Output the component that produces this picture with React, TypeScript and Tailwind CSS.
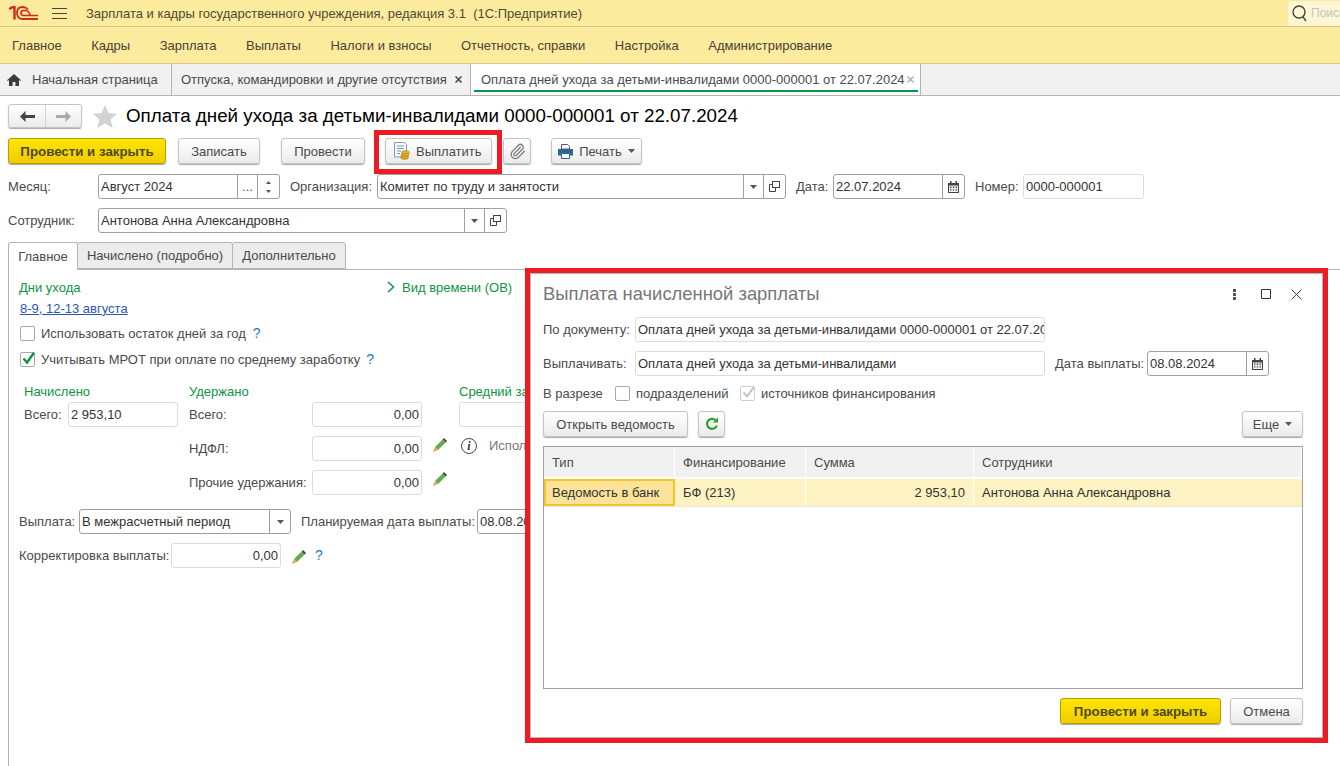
import React from "react";
import { Paperclip } from "lucide-react";

function Btn({ className = "", yellow = false, children }: { className?: string; yellow?: boolean; children: React.ReactNode }) {
  return (
    <div
      className={
        "flex h-[26px] shrink-0 items-center justify-center rounded-[3px] border shadow-[0_1px_1px_#a8a8a8] " +
        (yellow
          ? "border-[#b59f00] bg-linear-to-b from-[#ffe600] to-[#f0cc00] text-[13.3px] font-bold text-[#4d4a20] "
          : "border-[#c4c4c4] bg-linear-to-b from-white to-[#ebebeb] text-[#4a4a4a] ") +
        className
      }
    >
      {children}
    </div>
  );
}

function Field({ className = "", light = false, right = false, children, addons }: { className?: string; light?: boolean; right?: boolean; children?: React.ReactNode; addons?: React.ReactNode }) {
  return (
    <div className={"flex h-[25px] shrink-0 items-stretch overflow-hidden rounded-[3px] border bg-white text-[#333] " + (light ? "border-[#dcdcdc] " : "border-[#a0a0a0] ") + className}>
      <div className={"flex min-w-0 flex-1 items-center overflow-hidden whitespace-nowrap px-[2px] " + (right ? "justify-end" : "")}>{children}</div>
      {addons}
    </div>
  );
}

function Addon({ className = "", children }: { className?: string; children?: React.ReactNode }) {
  return <div className={"flex shrink-0 items-center justify-center border-l border-[#a0a0a0] " + className}>{children}</div>;
}

const Caret = ({ c = "#555" }: { c?: string }) => (
  <svg width="7" height="4" viewBox="0 0 7 4"><path d="M0 0h7L3.5 4z" fill={c} /></svg>
);

const OpenIcon = () => (
  <svg width="11" height="11" viewBox="0 0 11 11" fill="none" stroke="#444" strokeWidth="1">
    <rect x="3.5" y="0.5" width="7" height="6" />
    <path d="M3.5 3.5H.5v7h6V6.5" />
  </svg>
);

const Calendar = () => (
  <svg width="11" height="12" viewBox="0 0 11 12">
    <path d="M0 2h11v10H0z" fill="#444" />
    <path d="M2 0h1.5v3H2zM7.5 0H9v3H7.5z" fill="#444" />
    <path d="M1 4.5h9V11H1z" fill="#f2f2f2" />
    <path d="M2 5.5h1.4v1.4H2zM4.8 5.5h1.4v1.4H4.8zM7.6 5.5H9v1.4H7.6zM2 8.2h1.4v1.4H2zM4.8 8.2h1.4v1.4H4.8zM7.6 8.2H9v1.4H7.6z" fill="#444" />
  </svg>
);

const Pencil = () => (
  <svg width="14" height="14" viewBox="0 0 14 14" className="block shrink-0">
    <path d="M9.6 1.4 12.6 4.4 5 12 2 9z" fill="#5fae4d" />
    <path d="M9.6 1.4 11 0l3 3-1.4 1.4z" fill="#3f4a3c" />
    <path d="M2 9l3 3-4.6 1.6z" fill="#e9a23b" />
    <path d="M.9 12.4l.7.7-1.2.5z" fill="#333" />
  </svg>
);

const Help = ({ className = "" }: { className?: string }) => <span className={"text-[14px] text-[#1b7cc4] " + className}>?</span>;

const Box = ({ className = "", children }: { className?: string; children?: React.ReactNode }) => (
  <span className={"relative block h-[15px] w-[15px] shrink-0 rounded-[2px] border border-[#a8a8a8] bg-white " + className}>{children}</span>
);

const Check = ({ c, w = 2.4 }: { c: string; w?: number }) => (
  <svg className="absolute -top-[2px] left-0" width="15" height="15" viewBox="0 0 15 15" fill="none">
    <path d="M2.5 7.5 6 11.5 13 1.8" stroke={c} strokeWidth={w} />
  </svg>
);

const Close = ({ c }: { c: string }) => (
  <svg width="7" height="7" viewBox="0 0 7 7" stroke={c} strokeWidth="1.5"><path d="M.5.5l6 6M6.5.5l-6 6" /></svg>
);

export default function App() {
  return (
    <div className="relative flex h-[766px] w-[1340px] flex-col overflow-hidden bg-white font-['Liberation_Sans',Arial,sans-serif] text-[13px] leading-[15px] text-[#4a4a4a]">
      {/* title bar */}
      <div className="flex h-[27px] shrink-0 items-center border-b border-[#d6c887] bg-[#fbeb9d]">
        <svg className="ml-[9px] shrink-0" width="29" height="14" viewBox="0 0 29 14" fill="none" stroke="#d8261c">
          <path d="M0 3 3.500 1.200h2V13.500" strokeWidth="2.4" />
          <path d="M19 3.500C17.500 1.800 15.500 1 13.500 1 10 1 8 3.500 8 7c0 3.500 2.200 6 5.500 6H29" strokeWidth="1.8" />
          <path d="M29 9.500H14.500a2.500 2.500 0 0 1 0-5h2c2.200 0 3.800 1.600 4.800 5" strokeWidth="1.600" />
        </svg>
        <svg className="ml-[14px] shrink-0" width="15" height="11" viewBox="0 0 15 11" stroke="#444"><path d="M0 .5h15M0 5.500h15M0 10.500h15" /></svg>
        <span className="ml-[19px] text-[#4f4a35]">Зарплата и кадры государственного учреждения, редакция 3.1&nbsp; (1С:Предприятие)</span>
        <div className="ml-auto flex h-[25px] w-[52px] items-center overflow-hidden rounded-l-[3px] bg-[#fdf6d4] pl-[3px]">
          <svg className="shrink-0" width="17" height="18" viewBox="0 0 17 18" fill="none" stroke="#444" strokeWidth="1.4"><circle cx="8" cy="8" r="6" /><path d="m12 13 3 4" /></svg>
          <span className="ml-[3px] text-[12px] text-[#c4c4c4]">Поиск</span>
        </div>
      </div>
      {/* menu */}
      <div className="flex h-[37px] shrink-0 items-center gap-[29.5px] border-b border-[#d6c887] bg-[#fbeb9d] pl-[12px] text-[#4a4038]">
        {["Главное", "Кадры", "Зарплата", "Выплаты", "Налоги и взносы", "Отчетность, справки", "Настройка", "Администрирование"].map((t) => (
          <span key={t}>{t}</span>
        ))}
      </div>
      {/* tabs */}
      <div className="flex h-[32px] shrink-0 items-stretch border-b border-[#b4b4b4] bg-[#f1f1f1]">
        <div className="flex w-[172px] items-center border-r border-[#b4b4b4] pl-[7px]">
          <svg width="14" height="12" viewBox="0 0 14 12"><path d="M7 0 0 6.2l.8.8L2 6v6h3.600V8h2.800v4H12V6l1.200 1 .8-.8z" fill="#3d3d3d" /></svg>
          <span className="ml-[11px]">Начальная страница</span>
        </div>
        <div className="flex w-[299px] items-center border-r border-[#b4b4b4] pl-[9px]">
          <span>Отпуска, командировки и другие отсутствия</span>
          <span className="ml-auto mr-[8px]"><Close c="#444" /></span>
        </div>
        <div className="relative flex w-[450px] items-center border-r border-[#b4b4b4] bg-white pl-[10px]">
          <span>Оплата дней ухода за детьми-инвалидами 0000-000001 от 22.07.2024</span>
          <span className="ml-auto mr-[6px]"><Close c="#b0b0b0" /></span>
          <div className="absolute bottom-[3px] left-[3px] right-[2px] h-[2px] bg-[#0c9447]" />
        </div>
      </div>
      {/* document title */}
      <div className="mt-[8px] flex h-[24px] shrink-0 items-center pl-[8px]">
        <div className="flex h-[24px] w-[74px] items-stretch rounded-[3px] border border-[#c4c4c4] bg-linear-to-b from-white to-[#ebebeb] shadow-[0_1px_1px_#a8a8a8]">
          <div className="flex w-[37px] items-center justify-center border-r border-[#d4d4d4]">
            <svg width="15" height="11" viewBox="0 0 15 11"><path d="M5.500 0 0 5.500 5.500 11V7H15V4H5.500z" fill="#444" /></svg>
          </div>
          <div className="flex flex-1 items-center justify-center">
            <svg width="15" height="11" viewBox="0 0 15 11"><path d="M9.500 0 15 5.500 9.500 11V7H0V4h9.500z" fill="#aaa" /></svg>
          </div>
        </div>
        <svg className="ml-[11px]" width="24" height="23" viewBox="0 0 24 23"><path d="m12 0 3.600 8 8.400.8-6.400 5.600 2 8.600L12 18.400 4.400 23l2-8.600L0 8.800 8.400 8z" fill="#d2d2d2" /></svg>
        <span className="ml-[9px] text-[18.8px] leading-[22px] text-black">Оплата дней ухода за детьми-инвалидами 0000-000001 от 22.07.2024</span>
      </div>
      {/* toolbar */}
      <div className="ml-[8px] mt-[10px] flex h-[26px] shrink-0 items-center">
        <Btn yellow className="w-[158px]">Провести и закрыть</Btn>
        <Btn className="ml-[12px] w-[82px]">Записать</Btn>
        <Btn className="ml-[21px] w-[84px]">Провести</Btn>
        <Btn className="ml-[20px] w-[107px] justify-start gap-[6px] pl-[7px]">
          <svg width="17" height="18" viewBox="0 0 17 18">
            <path d="M1.500.5h10l2 2V15h-12z" fill="#f7f9fc" stroke="#8a9ab0" />
            <path d="M4 4h7M4 6.500h7M4 9h4M4 11.500h3" stroke="#7f94b5" />
            <ellipse cx="12.500" cy="10.500" rx="4" ry="1.800" fill="#f0c040" stroke="#a37a10" strokeWidth=".7" />
            <ellipse cx="12" cy="13" rx="4" ry="1.800" fill="#eab52e" stroke="#a37a10" strokeWidth=".7" />
            <ellipse cx="11.500" cy="15.500" rx="4" ry="1.800" fill="#e3a820" stroke="#a37a10" strokeWidth=".7" />
          </svg>
          Выплатить
        </Btn>
        <Btn className="ml-[11px] w-[28px]"><Paperclip size={17} color="#777" strokeWidth={1.7} /></Btn>
        <Btn className="ml-[20px] w-[91px] gap-[6px]">
          <svg width="15" height="15" viewBox="0 0 15 15">
            <path d="M3.500.5h6l2 2V5h-8z" fill="#fff" stroke="#557" />
            <path d="M0 5h15v6.500h-3V9H3v2.500H0z" fill="#2f6690" />
            <path d="M3.500 9.500h8v5h-8z" fill="#fff" stroke="#2f6690" />
          </svg>
          Печать
          <Caret />
        </Btn>
      </div>
      {/* month row */}
      <div className="ml-[8px] mt-[10px] flex h-[25px] shrink-0 items-center">
        <span className="w-[90px]">Месяц:</span>
        <Field
          className="w-[182px]"
          addons={
            <>
              <Addon className="w-[20px] text-[#555]">...</Addon>
              <Addon className="w-[22px] flex-col gap-[6px]">
                <svg width="5" height="3" viewBox="0 0 5 3"><path d="M2.500 0 5 3H0z" fill="#555" /></svg>
                <svg width="5" height="3" viewBox="0 0 5 3"><path d="M0 0h5L2.500 3z" fill="#555" /></svg>
              </Addon>
            </>
          }
        >
          Август 2024
        </Field>
        <span className="ml-[10px] w-[87px]">Организация:</span>
        <Field
          className="w-[409px]"
          addons={
            <>
              <Addon className="w-[20px]"><Caret /></Addon>
              <Addon className="w-[22px]"><OpenIcon /></Addon>
            </>
          }
        >
          Комитет по труду и занятости
        </Field>
        <span className="ml-[10px] w-[37px]">Дата:</span>
        <Field className="w-[132px]" addons={<Addon className="w-[22px]"><Calendar /></Addon>}>22.07.2024</Field>
        <span className="ml-[10px] w-[48px]">Номер:</span>
        <Field light className="w-[121px]">0000-000001</Field>
      </div>
      {/* employee row */}
      <div className="ml-[8px] mt-[9px] flex h-[25px] shrink-0 items-center">
        <span className="w-[90px]">Сотрудник:</span>
        <Field
          className="w-[409px]"
          addons={
            <>
              <Addon className="w-[20px]"><Caret /></Addon>
              <Addon className="w-[22px]"><OpenIcon /></Addon>
            </>
          }
        >
          Антонова Анна Александровна
        </Field>
      </div>
      {/* form tabs */}
      <div className="ml-[8px] mt-[9px] flex h-[27px] shrink-0 items-stretch">
        <div className="z-10 -mb-px flex w-[70px] items-center justify-center rounded-t-[3px] border border-b-0 border-[#b4b4b4] bg-white">Главное</div>
        <div className="-ml-px flex w-[156px] items-center justify-center rounded-t-[3px] border border-[#b4b4b4] bg-[#ececec]">Начислено (подробно)</div>
        <div className="-ml-px flex w-[114px] items-center justify-center rounded-t-[3px] border border-[#b4b4b4] bg-[#ececec]">Дополнительно</div>
      </div>
      {/* form panel */}
      <div className="ml-[8px] flex flex-1 flex-col border-l border-t border-[#b4b4b4] pl-[10px] whitespace-nowrap">
        <div className="mt-[9px] flex h-[16px] items-center text-[#0c9447]">
          <span className="w-[368px]">Дни ухода</span>
          <svg width="8" height="12" viewBox="0 0 8 12" fill="none" stroke="#0c9447" strokeWidth="1.500"><path d="m1 1 5.500 5L1 11" /></svg>
          <span className="ml-[7px]">Вид времени (ОВ)</span>
        </div>
        <div className="ml-[1px] mt-[5px] flex h-[16px] items-center">
          <span className="text-[#2b55b5] underline">8-9, 12-13 августа</span>
        </div>
        <div className="ml-[1px] mt-[10px] flex h-[15px] items-center">
          <Box />
          <span className="ml-[6px]">Использовать остаток дней за год</span>
          <Help className="ml-[7px]" />
        </div>
        <div className="ml-[1px] mt-[11px] flex h-[15px] items-center">
          <Box><Check c="#0c9447" /></Box>
          <span className="ml-[6px]">Учитывать МРОТ при оплате по среднему заработку</span>
          <Help className="ml-[6px]" />
        </div>
        <div className="ml-[5px] mt-[14px] flex">
          <div className="w-[165px]">
            <div className="flex h-[21px] items-center text-[#0c9447]">Начислено</div>
            <div className="flex items-center">
              <span className="w-[44px]">Всего:</span>
              <Field light className="w-[110px]">2 953,10</Field>
            </div>
          </div>
          <div className="flex w-[270px] flex-col gap-[9px]">
            <div className="-mb-[9px] flex h-[21px] items-center text-[#0c9447]">Удержано</div>
            <div className="flex items-center">
              <span className="w-[123px]">Всего:</span>
              <Field light right className="w-[110px]">0,00</Field>
            </div>
            <div className="flex items-center">
              <span className="w-[123px]">НДФЛ:</span>
              <Field light right className="w-[110px]">0,00</Field>
              <span className="ml-[11px] -mt-[7px]"><Pencil /></span>
            </div>
            <div className="flex items-center">
              <span className="w-[123px]">Прочие удержания:</span>
              <Field light right className="w-[110px]">0,00</Field>
              <span className="ml-[11px] -mt-[7px]"><Pencil /></span>
            </div>
          </div>
          <div className="flex flex-col gap-[9px]">
            <div className="-mb-[9px] flex h-[21px] items-center text-[#0c9447]">Средний заработок</div>
            <Field light className="w-[110px]" />
            <div className="flex h-[25px] items-start pt-[2px]">
              <span className="ml-[2px] flex h-[16px] w-[16px] items-center justify-center rounded-full border-[1.5px] border-[#444] font-['Liberation_Serif',serif] text-[12px] font-bold italic text-[#333]">i</span>
              <span className="ml-[12px] text-[#777]">Используется</span>
            </div>
          </div>
        </div>
        <div className="mt-[14px] flex h-[25px] items-center">
          <span className="w-[60px]">Выплата:</span>
          <Field className="w-[212px]" addons={<Addon className="w-[21px]"><Caret /></Addon>}>В межрасчетный период</Field>
          <span className="ml-[10px] w-[176px]">Планируемая дата выплаты:</span>
          <Field className="w-[120px]">08.08.2024</Field>
        </div>
        <div className="mt-[9px] flex h-[25px] items-center">
          <span className="w-[152px]">Корректировка выплаты:</span>
          <Field light right className="w-[110px]">0,00</Field>
          <span className="ml-[11px] mt-[3px]"><Pencil /></span>
          <Help className="ml-[9px]" />
        </div>
      </div>

      {/* dialog */}
      <div className="absolute left-[525px] top-[268px] flex h-[475px] w-[803px] flex-col border-[5px] border-[#ed1c24] bg-white">
        <div className="flex h-full flex-col border border-[#b4b4b4] pl-[12px] pr-[19px]">
          <div className="flex h-[40px] shrink-0 items-center">
            <span className="text-[18.4px] leading-[22px] text-[#777]">Выплата начисленной зарплаты</span>
            <svg className="ml-auto" width="3" height="11" viewBox="0 0 3 11" fill="#555"><path d="M0 0h3v3H0zM0 4h3v3H0zM0 8h3v3H0z" /></svg>
            <svg className="ml-[25px]" width="10" height="10" viewBox="0 0 10 10" fill="none" stroke="#333"><path d="M.5.5h9v9h-9z" /></svg>
            <svg className="ml-[20px] mr-[1px]" width="11" height="11" viewBox="0 0 11 11" stroke="#444"><path d="m.5.5 10 10M10.500.5l-10 10" /></svg>
          </div>
          <div className="mt-[3px] flex h-[25px] shrink-0 items-center">
            <span className="w-[92px]">По документу:</span>
            <Field light className="w-[410px]">Оплата дней ухода за детьми-инвалидами 0000-000001 от 22.07.2024</Field>
          </div>
          <div className="mt-[9px] flex h-[25px] shrink-0 items-center">
            <span className="w-[92px]">Выплачивать:</span>
            <Field light className="w-[410px]">Оплата дней ухода за детьми-инвалидами</Field>
            <span className="ml-[10px] w-[92px]">Дата выплаты:</span>
            <Field className="w-[122px]" addons={<Addon className="w-[22px]"><Calendar /></Addon>}>08.08.2024</Field>
          </div>
          <div className="mt-[9px] flex h-[17px] shrink-0 items-center">
            <span className="w-[72px]">В разрезе</span>
            <Box className="h-[14px] w-[14px]" />
            <span className="ml-[6px] w-[104px]">подразделений</span>
            <Box className="h-[14px] w-[14px] border-[#cfcfcf] bg-[#f3f3f3]"><Check c="#c4c4c4" w={2} /></Box>
            <span className="ml-[6px]">источников финансирования</span>
          </div>
          <div className="mt-[9px] flex h-[26px] shrink-0 items-center">
            <Btn className="w-[145px]">Открыть ведомость</Btn>
            <Btn className="ml-[10px] w-[27px]">
              <svg width="14" height="14" viewBox="0 0 14 14" fill="none" stroke="#2f9e33" strokeWidth="2.200"><path d="M11.800 8.500A5 5 0 1 1 10.500 3.200" /><path d="M13 .5v5H8z" fill="#2f9e33" stroke="none" /></svg>
            </Btn>
            <Btn className="ml-auto w-[61px] gap-[6px]">Еще<Caret /></Btn>
          </div>
          <div className="mt-[9px] flex h-[243px] shrink-0 flex-col border border-[#a0a0a0]">
            <div className="grid h-[30px] grid-cols-[131px_131px_168px_1fr] bg-[#f1f1f1]">
              {["Тип", "Финансирование", "Сумма", "Сотрудники"].map((t) => (
                <div key={t} className="flex items-center border-r border-white pl-[8px]">{t}</div>
              ))}
            </div>
            <div className="mt-[2px] grid h-[28px] grid-cols-[131px_131px_168px_1fr] border-b border-[#e6e6e6] bg-[#fdf2c2] text-[#333]">
              <div className="flex items-center border-2 border-[#f6c525] bg-[#fce39a] pl-[6px]">Ведомость в банк</div>
              <div className="flex items-center border-r border-white pl-[8px]">БФ (213)</div>
              <div className="flex items-center justify-end border-r border-white pr-[8px]">2 953,10</div>
              <div className="flex items-center pl-[8px]">Антонова Анна Александровна</div>
            </div>
          </div>
          <div className="mt-[9px] flex h-[26px] shrink-0 items-center justify-end gap-[9px]">
            <Btn yellow className="w-[161px]">Провести и закрыть</Btn>
            <Btn className="w-[73px]">Отмена</Btn>
          </div>
        </div>
      </div>

      {/* annotation around the pay button */}
      <div className="absolute left-[374px] top-[130px] h-[44px] w-[128px] border-[5px] border-[#ed1c24]" />
    </div>
  );
}
